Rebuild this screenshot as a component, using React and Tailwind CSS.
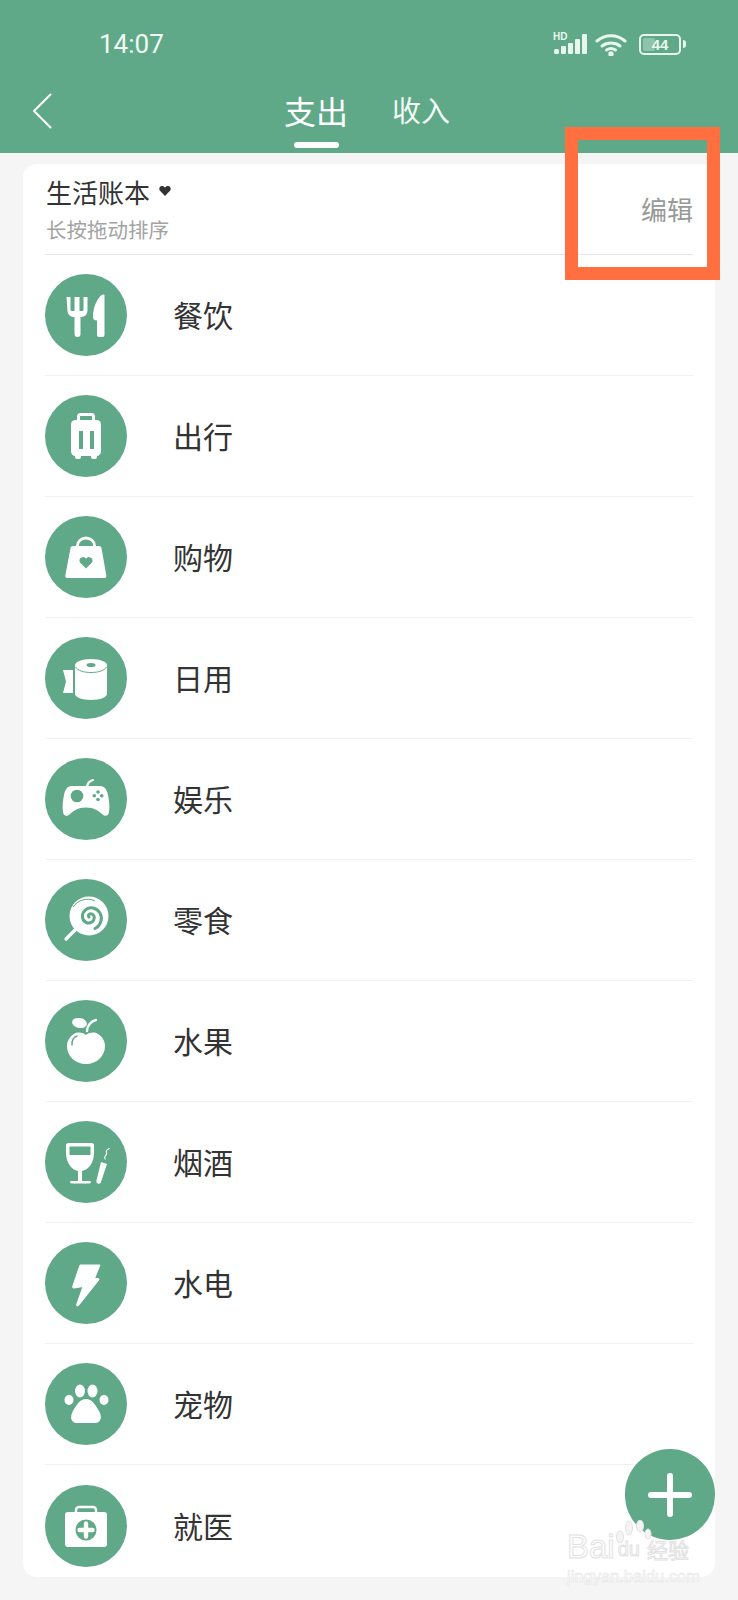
import React from 'react';

const G = '#5fa988';

// icons are drawn on the 82x82 circle
const icons = {
  food: (
    <>
      <path d="M21.500 23h4v12.500a1.500 1.500 0 0 0 1.500 1.500h2.500V23h5v14H37a1.500 1.500 0 0 0 1.500-1.500V23h4v14a6 6 0 0 1-6 6h-1v17a3 3 0 0 1-6 0V43h-1a6 6 0 0 1-6-6z" fill="#fff" />
      <path d="M59.500 21v40a2 2 0 0 1-2 2H54a2 2 0 0 1-2-2V46.500c-2.500 0-4-1-4-3.500 0-8 3-17 8-21.500 1.500-1.200 3.500-1.500 3.500-.5z" fill="#fff" />
    </>
  ),
  travel: (
    <>
      <path d="M33.500 25v-3.500a2 2 0 0 1 2-2h11a2 2 0 0 1 2 2V25" fill="none" stroke="#fff" strokeWidth="3" />
      <rect x="26" y="25" width="30" height="36" rx="4.500" fill="#fff" />
      <rect x="30" y="59" width="6" height="5" rx="2" fill="#fff" />
      <rect x="46" y="59" width="6" height="5" rx="2" fill="#fff" />
      <rect x="34" y="36" width="4" height="18" fill={G} />
      <rect x="45" y="36" width="4" height="18" fill={G} />
    </>
  ),
  shop: (
    <>
      <path d="M32.500 31v-1.500a8.500 7.500 0 0 1 17 0V31" fill="none" stroke="#fff" strokeWidth="2.800" />
      <path d="M28 30h26a2.500 2.500 0 0 1 2.500 2l4.800 27.500a2.200 2.200 0 0 1-2.200 2.500H22.500a2.200 2.200 0 0 1-2.200-2.500L25.500 32a2.500 2.500 0 0 1 2.500-2z" fill="#fff" />
      <path d="M41 52.500l-5.800-5.800a3.500 3.500 0 0 1 5.800-4 3.500 3.500 0 0 1 5.800 4z" fill={G} />
    </>
  ),
  roll: (
    <>
      <path d="M18 33h10v23H18l3-11.500z" fill="#fff" />
      <path d="M30 28c0-3 7-6 16-6s16 3 16 6v29c0 3-7 6-16 6s-16-3-16-6z" fill="#fff" />
      <path d="M30.500 30c2 3.500 8 5.500 15.500 5.500S59.500 33.500 61.500 30" fill="none" stroke={G} strokeWidth="1" />
      <ellipse cx="46" cy="28" rx="4.500" ry="2" fill={G} />
    </>
  ),
  game: (
    <>
      <path d="M42 30c0-4 2-7 6-8" fill="none" stroke="#fff" strokeWidth="2.200" strokeLinecap="round" />
      <path d="M27 28h28c5 0 7 4 8 9s2 11 1 17c-.5 4-4 5-6.500 2.500C54 53 49 49.500 41 49.500S28 53 24.500 56.500C22 59 18.500 58 18 54c-1-6 0-12 1-17s3-9 8-9z" fill="#fff" />
      <circle cx="32" cy="38" r="6.300" fill={G} />
      <circle cx="53" cy="34" r="1.800" fill={G} />
      <circle cx="53" cy="41.500" r="1.800" fill={G} />
      <circle cx="49.300" cy="37.700" r="1.800" fill={G} />
      <circle cx="56.700" cy="37.700" r="1.800" fill={G} />
    </>
  ),
  candy: (
    <>
      <circle cx="44" cy="37" r="19.500" fill="#fff" />
      <path d="M28 28c5-7 14-10 22-6" fill="none" stroke={G} strokeWidth="1" />
      <path d="M44 38c-1.500-2 1-4 3-3 3 1.500 3 6 0 8-4 2.500-9 0-9.500-5-.5-6 5-10 10.500-9 6 1.200 9.500 7 8 13-1 3.500-3 6-6 7.500" fill="none" stroke={G} strokeWidth="3" strokeLinecap="round" />
      <path d="M30 51L21 60" stroke="#fff" strokeWidth="3.200" strokeLinecap="round" />
    </>
  ),
  fruit: (
    <>
      <ellipse cx="34.500" cy="23" rx="7.500" ry="5" fill="#fff" transform="rotate(10 34.500 23)" />
      <path d="M42 31c0-5 4-10 9-11" fill="none" stroke="#fff" strokeWidth="2.400" strokeLinecap="round" />
      <path d="M41 35c4-3 9-3 12-1 5 3 7 8 7 12 0 10-8 18-19 18s-19-8-19-18c0-4 2-9 7-12 3-2 8-2 12 1z" fill="#fff" />
      <path d="M27 45c-.5-4 1.500-8 5-9" fill="none" stroke={G} strokeWidth="1.500" strokeLinecap="round" />
    </>
  ),
  wine: (
    <>
      <path d="M23 22h24c1 0 2 1 2 2v8c0 10-6 17-12 18v10h7.500c1 0 1.500 .6 1.500 1.300s-.5 1.200-1.500 1.200h-18c-1 0-1.500-.5-1.500-1.200s.5-1.300 1.500-1.300H33V50c-6-1-12-8-12-18v-8c0-1 1-2 2-2z" fill="#fff" />
      <path d="M24.500 25.500h21V33c0 .5-.3 1-1 1h-19c-.7 0-1-.5-1-1z" fill={G} />
      <path d="M56 41l6 2-6 18c-.5 1.500-1.500 2-3 1.500s-2-1.500-1.500-3z" fill="#fff" />
      <path d="M60 38c-2-3 3-4 1.500-6.500-1-2 1.500-3.500 3-4" fill="none" stroke="#fff" strokeWidth="1.200" strokeLinecap="round" />
    </>
  ),
  power: <path d="M35 23h20l-5.500 13.500H53c1 0 1.300 .8 .8 1.500L33.500 63.500c-1 1-2.200 .3-1.800-1L38 44.500l-9 1.500c-1 .2-1.500-.5-1.300-1.500z" fill="#fff" stroke="#fff" strokeWidth="1" strokeLinejoin="round" />,
  pet: (
    <>
      <ellipse cx="35" cy="28" rx="5" ry="6.500" fill="#fff" />
      <ellipse cx="47.500" cy="28" rx="5" ry="6.500" fill="#fff" />
      <ellipse cx="24" cy="37" rx="4.500" ry="5" fill="#fff" />
      <ellipse cx="59" cy="37" rx="4.500" ry="5" fill="#fff" />
      <path d="M41 36c6 0 9 5 13 12 3.500 6 2 12-4 12H32c-6 0-7.500-6-4-12 4-7 7-12 13-12z" fill="#fff" />
    </>
  ),
  medical: (
    <>
      <path d="M31 28v-3a3 3 0 0 1 3-3h14a3 3 0 0 1 3 3v3" fill="none" stroke="#fff" strokeWidth="2.400" />
      <rect x="20" y="27" width="42" height="35" rx="3" fill="#fff" />
      <circle cx="41" cy="45" r="10.500" fill={G} />
      <path d="M41 38.500v13M34.500 45h13" stroke="#fff" strokeWidth="4.400" strokeLinecap="round" />
    </>
  ),
};

const categories = [
  { name: '餐饮', icon: 'food' },
  { name: '出行', icon: 'travel' },
  { name: '购物', icon: 'shop' },
  { name: '日用', icon: 'roll' },
  { name: '娱乐', icon: 'game' },
  { name: '零食', icon: 'candy' },
  { name: '水果', icon: 'fruit' },
  { name: '烟酒', icon: 'wine' },
  { name: '水电', icon: 'power' },
  { name: '宠物', icon: 'pet' },
  { name: '就医', icon: 'medical' },
];

function CategoryRow({ name, icon, last }) {
  return (
    <div className={`flex items-center h-[121px] ${last ? '' : 'border-b border-[#f1f1f1]'}`}>
      <svg viewBox="0 0 82 82" className="w-[82px] h-[82px] shrink-0 rounded-full bg-[#5fa988]">
        {icons[icon]}
      </svg>
      <span className="ml-[46px] -mt-[2px] text-[30px] leading-none text-[#333333]">{name}</span>
    </div>
  );
}

function StatusIcons() {
  return (
    <div className="flex items-center">
      <div className="relative w-[36px] h-[22px]">
        <span className="absolute left-0 -top-px text-[10px] leading-none font-bold text-[#e8f7ee] font-['Liberation_Sans',sans-serif]">HD</span>
        <svg viewBox="0 0 36 22" className="w-[36px] h-[22px]">
          <rect x="1" y="16" width="5" height="5" rx="1.500" fill="#e8f7ee" />
          <rect x="8" y="13" width="5" height="8" rx="1" fill="#e8f7ee" />
          <rect x="15" y="10" width="5" height="11" rx="1" fill="#e8f7ee" />
          <rect x="22" y="6" width="5" height="15" rx="1" fill="#e8f7ee" />
          <rect x="29" y="1" width="5" height="20" rx="1" fill="#e8f7ee" />
        </svg>
      </div>
      <svg viewBox="0 0 32 23" className="ml-[6px] w-[32px] h-[23px]" fill="none" stroke="#e8f7ee" strokeWidth="3" strokeLinecap="round">
        <path d="M2 8c8-7 20-7 28 0" />
        <path d="M7 13c5-4 13-4 18 0" />
        <path d="M11.500 17c3-2 6-2 9 0" />
        <circle cx="16" cy="21" r="1.200" fill="#e8f7ee" />
      </svg>
      <div className="ml-[12px] relative flex items-center justify-center w-[42px] h-[21px] rounded-[5px] border-2 border-[#e8f7ee]">
        <div className="absolute left-[2px] top-[2px] bottom-[2px] w-[12px] rounded-[2px] bg-[#8fc4aa]" />
        <span className="relative text-[15px] leading-none font-bold text-[#e8f7ee] font-['Liberation_Sans',sans-serif]">44</span>
      </div>
      <div className="ml-[2px] w-[3px] h-[8px] rounded-r-sm bg-[#e8f7ee]" />
    </div>
  );
}

export default function App() {
  return (
    <div className="relative w-[738px] h-[1600px] overflow-hidden bg-[#f5f5f5] font-['Noto_Sans_CJK_SC','Noto_Sans',sans-serif]">
      {/* Header */}
      <div className="h-[153px] bg-[#5fa988]">
        <div className="flex items-center justify-between h-[88px] pl-[99px] pr-[52px]">
          <span className="text-[26px] leading-none text-[#f2fbf5] font-['Roboto',sans-serif]">14:07</span>
          <StatusIcons />
        </div>
        <div className="flex items-start pl-[32px]">
          <svg viewBox="0 0 20 36" className="mt-[5px] w-[20px] h-[36px]" fill="none" stroke="#fff" strokeWidth="2" strokeLinecap="round" strokeLinejoin="round">
            <path d="M18.500 1.500L2 18l16.500 16.500" />
          </svg>
          <div className="ml-[232px] -mt-px flex flex-col items-center">
            <span className="h-[46px] text-[32px] leading-[46px] text-white">支出</span>
            <div className="mt-[9px] w-[45px] h-[6px] rounded-full bg-white" />
          </div>
          <span className="ml-[44px] -mt-[2px] h-[46px] text-[29px] leading-[46px] text-[#f2fbf5]">收入</span>
        </div>
      </div>

      {/* Category card */}
      <div className="mt-[11px] ml-[23px] w-[692px] h-[1413px] rounded-[14px] bg-white px-[22px] overflow-hidden">
        <div className="flex items-center justify-between h-[91px] border-b border-[#e6e6e6]">
          <div className="self-start pt-[10px]">
            <div className="flex items-center h-[36px] pl-px">
              <span className="text-[26px] leading-none text-[#333333]">生活账本</span>
              <svg viewBox="0 0 12 10" className="ml-[9px] -mt-[2px] w-[12px] h-[10px]">
                <path d="M6 10L.8 4.500C-.5 2.500 .8 0 3 0c1.300 0 2.300 .6 3 1.500C6.700 .6 7.700 0 9 0c2.200 0 3.500 2.500 2.200 4.500z" fill="#333333" />
              </svg>
            </div>
            <div className="mt-[4px] pl-px text-[20.500px] leading-[30px] text-[#a3a3a3]">长按拖动排序</div>
          </div>
          <span className="text-[26px] leading-none text-[#999999]">编辑</span>
        </div>
        {categories.map((c, i) => (
          <CategoryRow key={c.name} name={c.name} icon={c.icon} last={i === categories.length - 1} />
        ))}
      </div>

      {/* Add button */}
      <button className="absolute left-[625px] top-[1449px] flex items-center justify-center w-[90px] h-[91px] rounded-full bg-[#5fa988]">
        <svg viewBox="0 0 44 44" className="w-[44px] h-[44px]">
          <path d="M22 3v38M3 22h38" stroke="#fff" strokeWidth="6" strokeLinecap="round" />
        </svg>
      </button>

      {/* Watermark */}
      <div className="absolute left-[567px] top-[1520px] w-[132px] text-white [-webkit-text-stroke:1px_#e2e2e2] font-['Liberation_Sans',sans-serif]">
        <svg viewBox="0 0 42 26" className="absolute left-[45px] top-0 w-[42px] h-[26px]" fill="#f4f4f4" stroke="#e2e2e2">
          <ellipse cx="8" cy="17" rx="3.500" ry="6" />
          <ellipse cx="17" cy="8" rx="3.500" ry="7" />
          <ellipse cx="28" cy="6" rx="3.500" ry="6" />
          <ellipse cx="36" cy="14" rx="3" ry="5" />
        </svg>
        <div className="relative flex items-end h-[43px] text-[33px] leading-none">
          <span>Bai</span>
          <span className="ml-[3px] text-[20px] leading-[28px]">du</span>
          <span className="ml-[7px] text-[21px] leading-[28px] font-['Noto_Sans_CJK_SC',sans-serif]">经验</span>
        </div>
        <div className="mt-[4px] text-[16.500px] leading-[18px] whitespace-nowrap [-webkit-text-stroke:0.5px_#e2e2e2]">jingyan.baidu.com</div>
      </div>

      {/* Annotation box */}
      <div className="absolute left-[565px] top-[127px] w-[155px] h-[153px] border-[13px] border-[#ff6f3f]" />
    </div>
  );
}
